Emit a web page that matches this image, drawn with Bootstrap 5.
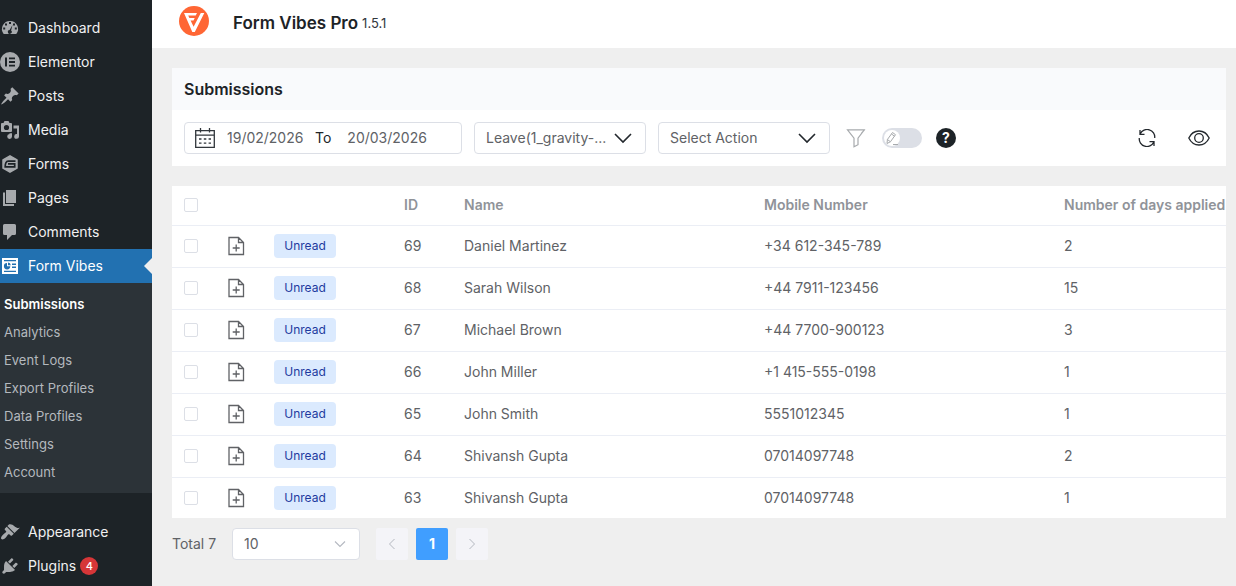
<!DOCTYPE html>
<html lang="en">
<head>
<meta charset="utf-8">
<meta name="viewport" content="width=device-width, initial-scale=1">
<title>Form Vibes Pro – Submissions</title>
<link href="https://cdn.jsdelivr.net/npm/bootstrap@5.3.0/dist/css/bootstrap.min.css" rel="stylesheet">
<style>
body{font-family:Inter,"Liberation Sans",sans-serif;font-size:14px;line-height:20px;color:#606266;background:#efefef}
a{text-decoration:none}
svg{display:block;flex:none}
.side{width:152px;flex:none;background:#1d2327;padding-top:11px}
.side-link{display:flex;align-items:center;height:34px;color:#f0f0f1;position:relative}
.side-link .glyph{width:28px;flex:none;color:#a7aaad}
.side-link.current{background:#2271b1;color:#fff}
.side-link.current .glyph{color:#fff}
.side-link.current::after{content:"";position:absolute;right:0;top:9px;border:8px solid transparent;border-right-color:#efefef;border-left:0}
.sub-menu{background:#2c3338;padding:7px 0;margin-bottom:22px}
.sub-menu a{display:block;height:28px;line-height:28px;padding-left:4px;font-size:13px;color:#b4b9be}
.sub-menu a.active{color:#fff;font-weight:600}
.count{background:#d63638;color:#fff;width:18px;height:18px;line-height:18px;font-size:11px;font-weight:500}
.topbar{height:48px;padding:0 0 2px 27px}
.topbar h1{font-size:17px;line-height:24px;font-weight:600;color:#1d2327}
.version{font-size:13px;color:#32373c}
.workspace{padding:20px 10px 0 20px}
.workspace section + section{margin-top:20px}
.workspace footer{margin-top:10px}
.panel-title{background:#f9fafc;font-size:16px;line-height:22px;font-weight:600;color:#1d2327;padding:10px 12px}
.tools{padding:12px}
.box{height:32px;border:1px solid #dcdfe6;border-radius:4px;background-color:#fff;color:#606266;font-size:14px}
.period{width:278px;padding-left:10px}
.period input{width:80px;border:0;padding:0;color:#606266;background:transparent;outline:0}
.pick{width:172px;padding:0 36px 0 11px;line-height:20px;background-position:right 13px center;background-size:18px 18px;background-image:url("data:image/svg+xml,%3Csvg xmlns='http://www.w3.org/2000/svg' viewBox='0 0 18 18' fill='none' stroke='%2323282d' stroke-width='1.6'%3E%3Cpath d='M1 5l8 8 8-8'/%3E%3C/svg%3E")}
.tools .pick{margin-left:12px}
.pick.size{width:128px;background-size:12px 12px;background-image:url("data:image/svg+xml,%3Csvg xmlns='http://www.w3.org/2000/svg' viewBox='0 0 12 12' fill='none' stroke='%23b4b8c0' stroke-width='1.1'%3E%3Cpath d='M1 3.5l5 5 5-5'/%3E%3C/svg%3E")}
.plain{border:0;background:none;padding:0;color:#23282d}
.toggle{position:relative;width:40px;height:20px}
.toggle input{appearance:none;display:block;width:40px;height:20px;margin:0;border-radius:10px;background:#dcdfe6}
.toggle input::before{content:"";display:block;width:16px;height:16px;margin:2px;border-radius:50%;background:#fff}
.toggle input::before{float:left}
.toggle svg{position:absolute;left:3px;top:3px;pointer-events:none}
.help{width:20px;height:20px;margin-left:14px;border-radius:50%;background:#1d2327;color:#fff;font-weight:700;line-height:20px}
.entries{table-layout:fixed;color:#606266}
.entries th,.entries td{height:42px;padding:0 0 0 10px;vertical-align:middle;border-bottom:1px solid #ebeef5;white-space:nowrap}
.entries th{height:39px;font-weight:600;color:#909399}
.entries th:first-child,.entries td:first-child{padding-left:12px}
.entries tbody tr:last-child td{height:41px;border-bottom:0}
.w-tick{width:46px}.w-status{width:130px}.w-id{width:60px}.w-text{width:300px}
.tick{appearance:none;display:block;width:14px;height:14px;margin:0;border:1px solid #dcdfe6;border-radius:2px;background:#fff}
.tick:checked{background:#409eff}
.note{color:#606266}
.unread{display:block;width:62px;height:24px;line-height:24px;font-size:12px;border-radius:4px;background:#dbeafe;color:#1e3a9f}
.pager{width:32px;height:32px;border:0;border-radius:2px;background:#f4f4f8;color:#b4b8c0;padding:0}
.pager.on{background:#409eff;color:#fff;font-weight:700}
</style>
</head>
<body>
<svg width="0" height="0" class="position-absolute" aria-hidden="true">
<symbol id="newdoc" viewBox="0 0 17 20"><path d="M1 1.500h9.500l5 5v12H1zM10.500 1.500v5h5M8.200 8.500v7M4.700 12h7" fill="none" stroke="currentColor" stroke-width="1.300"/></symbol>
</svg>
<div class="d-flex min-vh-100">
<nav class="side" aria-label="Admin menu">
<a class="side-link" href="#"><span class="glyph"><svg width="20" height="20" viewBox="0 0 20 20"><path fill="currentColor" d="M10 3a8 8 0 0 0-6.500 12.700c.3.400.8.300 1.200.3h10.600c.5 0 .9 0 1.200-.3A8 8 0 0 0 10 3z"/><path fill="#1d2327" d="M9 4h2v2H9zM5 5.500h2v2H5zM13 5.500h2v2h-2zM3.200 9.500h2v2h-2zM14.800 9.500h2v2h-2zM12.500 7l-1.400 5.600a1.900 1.900 0 1 1-1.500-.5z"/></svg></span>Dashboard</a>
<a class="side-link" href="#"><span class="glyph"><svg width="20" height="20" viewBox="0 0 20 20"><circle cx="10" cy="10" r="10" fill="currentColor"/><path fill="#1d2327" d="M5 5.500h2v9H5zM9 5.500h6v1.800H9zM9 9.100h6v1.800H9zM9 12.700h6v1.800H9z"/></svg></span>Elementor</a>
<a class="side-link" href="#"><span class="glyph"><svg width="20" height="20" viewBox="0 0 20 20"><path fill="currentColor" d="M10.440 3.020l1.820-1.820 6.360 6.350-1.830 1.820c-1.050-.68-2.480-.57-3.410.36l-.75.750c-.92.930-1.040 2.350-.35 3.410l-1.830 1.820-2.410-2.410-2.800 2.790c-.42.420-3.380 2.710-3.800 2.290s1.860-3.390 2.280-3.810l2.790-2.790L4.100 9.360l1.830-1.820c1.050.690 2.480.57 3.400-.36l.750-.75c.930-.92 1.050-2.350.36-3.410z"/></svg></span>Posts</a>
<a class="side-link" href="#"><span class="glyph"><svg width="20" height="20" viewBox="0 0 20 20"><path fill="currentColor" fill-rule="evenodd" d="M2 3h1.500l1-2h4l1 2H11a1 1 0 0 1 1 1v7a1 1 0 0 1-1 1H2a1 1 0 0 1-1-1V4a1 1 0 0 1 1-1zm4.500 1.900a2.600 2.600 0 1 0 0 5.200 2.600 2.600 0 0 0 0-5.200z"/><path fill="currentColor" d="M13.500 5.500H19v11a2.400 2.400 0 1 1-2-2.400V8.500h-3.500zM9.500 13.300H12v3.200a2.400 2.400 0 1 1-2.500-2.400z"/></svg></span>Media</a>
<a class="side-link" href="#"><span class="glyph"><svg width="20" height="20" viewBox="0 0 20 20"><path fill="currentColor" stroke="currentColor" stroke-width="1.500" stroke-linejoin="round" d="M10 1.800l7 4v8.400l-7 4-7-4V5.800z"/><path fill="none" stroke="#1d2327" stroke-width="1.700" d="M15.500 7.200H8.200c-2.200 0-3 2.600-3 5.600h9.500V9.900H8"/></svg></span>Forms</a>
<a class="side-link" href="#"><span class="glyph"><svg width="20" height="20" viewBox="0 0 20 20"><path fill="currentColor" d="M6 2h10v13H6zM3 4.500h2V16h9v2H3z"/></svg></span>Pages</a>
<a class="side-link" href="#"><span class="glyph"><svg width="20" height="20" viewBox="0 0 20 20"><path fill="currentColor" d="M4.500 2h10A1.500 1.500 0 0 1 16 3.500v8a1.500 1.500 0 0 1-1.500 1.500H12l-5 5v-5H4.500A1.500 1.500 0 0 1 3 11.500v-8A1.500 1.500 0 0 1 4.500 2z"/></svg></span>Comments</a>
<a class="side-link current" href="#" aria-current="true"><span class="glyph"><svg width="20" height="20" viewBox="0 0 20 20"><path fill="currentColor" d="M2 2h16v16H2z"/><path fill="#2271b1" d="M4 4h12v1.300H4zM4 14.700h12V16H4zM12 7.500h4V9h-4zM12 10.500h4V12h-4zM7 7v3.300h3.300A3.200 3.200 0 1 1 7 7zM8 6.500a3 3 0 0 1 2.800 2.800H8z"/></svg></span>Form Vibes</a>
<div class="sub-menu">
<a href="#" class="active">Submissions</a><a href="#">Analytics</a><a href="#">Event Logs</a><a href="#">Export Profiles</a><a href="#">Data Profiles</a><a href="#">Settings</a><a href="#">Account</a>
</div>
<a class="side-link" href="#"><span class="glyph"><svg width="20" height="20" viewBox="0 0 20 20"><path fill="currentColor" d="M14.480 11.060L7.410 3.990l1.500-1.500c.5-.56 2.300-.47 3.510.32 1.210.8 1.430 1.280 2.910 2.100 1.180.640 2.450 1.260 4.450.850zm-.71.710L6.700 4.700 4.930 6.470c-.39.390-.39 1.020 0 1.410l1.060 1.060c.39.390.39 1.030 0 1.420-.6.600-1.430 1.110-2.210 1.690-.35.260-.7.530-1.010.840C1.430 14.230.4 16.080 1.400 17.070c.990 1 2.840-.03 4.180-1.360.31-.31.580-.66.850-1.020.570-.78 1.080-1.610 1.690-2.210.39-.39 1.020-.39 1.410 0l1.060 1.060c.39.390 1.020.39 1.410 0z"/></svg></span>Appearance</a>
<a class="side-link" href="#"><span class="glyph"><svg width="20" height="20" viewBox="0 0 20 20"><path fill="currentColor" d="M13.110 4.360L9.870 7.600 8 5.730l3.240-3.240c.35-.34 1.050-.2 1.560.320.520.51.660 1.210.310 1.550zm-8 1.770l.910-1.120 9.010 9.010-1.190.840c-.71.710-2.630 1.160-3.820 1.160H6.140L4.900 17.260c-.59.590-1.540.59-2.120 0-.59-.58-.59-1.530 0-2.120l1.240-1.240v-3.880c0-1.130.4-3.190 1.090-3.890zm7.260 3.970l3.240-3.240c.340-.35 1.040-.21 1.550.310.520.51.660 1.210.310 1.550l-3.240 3.250z"/></svg></span>Plugins<span class="count rounded-circle text-center ms-1">4</span></a>
</nav>
<div class="flex-grow-1" style="min-width:0">
<header class="topbar bg-white d-flex align-items-center">
<svg width="30" height="30" viewBox="0 0 30 30" class="mb-1"><circle cx="15" cy="15" r="15" fill="#ff6634"/><path fill="#fff" d="M5 7h13l-1.300 2.600H9.200l1.200 2.400h5.300l-1.200 2.500h-2.900l3 6.300L21.800 7h3.500L15.800 26h-2.500z"/></svg>
<h1 class="mb-0 ms-4">Form Vibes Pro</h1><span class="version ms-1">1.5.1</span>
</header>
<main class="workspace">
<section class="bg-white">
<h2 class="panel-title mb-0">Submissions</h2>
<div class="tools d-flex align-items-center">
<div class="box period d-flex align-items-center">
<svg width="20" height="20" viewBox="0 0 20 20" class="me-2" fill="none" stroke="#32373c" stroke-width="1.300"><path d="M.7 2.700h18.600v16.600H.7zM.7 7.200h18.600M5.500 0v4.500M14.500 0v4.500"/><path stroke-dasharray="2.500 2.300" d="M4 11h12M4 15.200h12"/></svg>
<input type="text" class="ms-1" aria-label="Start date" value="19/02/2026"><span class="ms-2 me-3 text-dark">To</span><input type="text" aria-label="End date" value="20/03/2026">
</div>
<select class="form-select box pick" aria-label="Form"><option>Leave(1_gravity-...</option></select>
<select class="form-select box pick" aria-label="Action"><option>Select Action</option></select>
<button class="plain ms-3" aria-label="Filter"><svg width="20" height="20" viewBox="0 0 20 20" fill="none" stroke="#a7aaad" stroke-width="1.200"><path d="M1.500 1.800h16.800L12 10.200v6.500l-4 2.100v-8.600zM15.500 5.200l3-3.400"/></svg></button>
<label class="toggle ms-3"><input type="checkbox" role="switch" aria-label="Edit mode"><svg width="15" height="15" viewBox="0 0 15 15" fill="none" stroke="#a7aaad"><path d="M2 12.500l.4-4L7.500 1.500l3 2.200-5 7zM6.500 3l3 2.200M2.400 8.500l3 2.200M8 13.500h5"/></svg></label>
<button class="plain help" aria-label="Help">?</button>
<button class="plain ms-auto" aria-label="Refresh"><svg width="18" height="18" viewBox="0 0 18 18" fill="none" stroke="currentColor" stroke-width="1.300"><path d="M2.300 4.800A7.600 7.600 0 0 1 16.700 9M15.700 13.200A7.600 7.600 0 0 1 1.300 9M2 1v4.300h4.500M16 17v-4.300h-4.500"/></svg></button>
<button class="plain ms-4 ps-2 me-1" aria-label="Visible columns"><svg width="22" height="20" viewBox="0 0 22 20" fill="none" stroke="currentColor" stroke-width="1.300"><path d="M.8 10C3 5.500 6.500 3 11 3s8 2.500 10.200 7C19 14.500 15.500 17 11 17S3 14.500.8 10z"/><circle cx="11" cy="10" r="4.300"/></svg></button>
</div>
</section>
<section class="overflow-hidden">
<table class="entries bg-white w-100" id="entries">
<colgroup><col class="w-tick"><col class="w-tick"><col class="w-status"><col class="w-id"><col class="w-text"><col class="w-text"><col></colgroup>
<thead><tr><th><input type="checkbox" class="tick" aria-label="Select all"></th><th></th><th></th><th>ID</th><th>Name</th><th>Mobile Number</th><th>Number of days applied</th></tr></thead>
<tbody></tbody>
</table>
</section>
<footer class="d-flex align-items-center">
<span>Total 7</span>
<select class="form-select box pick size mx-3" aria-label="Rows per page"><option>10</option></select>
<div class="d-flex gap-2">
<button class="pager" aria-label="Previous page"><svg class="m-auto" width="12" height="12" viewBox="0 0 12 12" fill="none" stroke="currentColor"><path d="M8.500 1L3.500 6l5 5"/></svg></button>
<button class="pager on">1</button>
<button class="pager" aria-label="Next page"><svg class="m-auto" width="12" height="12" viewBox="0 0 12 12" fill="none" stroke="currentColor"><path d="M3.500 1l5 5-5 5"/></svg></button>
</div>
</footer>
</main>
</div>
</div>
<script src="https://cdn.jsdelivr.net/npm/bootstrap@5.3.0/dist/js/bootstrap.bundle.min.js"></script>
<script>
const rows=[[69,"Daniel Martinez","+34 612-345-789",2],[68,"Sarah Wilson","+44 7911-123456",15],[67,"Michael Brown","+44 7700-900123",3],[66,"John Miller","+1 415-555-0198",1],[65,"John Smith","5551012345",1],[64,"Shivansh Gupta","07014097748",2],[63,"Shivansh Gupta","07014097748",1]];
document.querySelector("#entries tbody").innerHTML=rows.map(r=>`<tr><td><input type="checkbox" class="tick" aria-label="Select entry ${r[0]}"></td><td><button class="plain note d-block" aria-label="Add note"><svg width="17" height="20"><use href="#newdoc"/></svg></button></td><td><span class="unread text-center">Unread</span></td>${r.map(c=>`<td>${c}</td>`).join("")}</tr>`).join("");
</script>
</body>
</html>
